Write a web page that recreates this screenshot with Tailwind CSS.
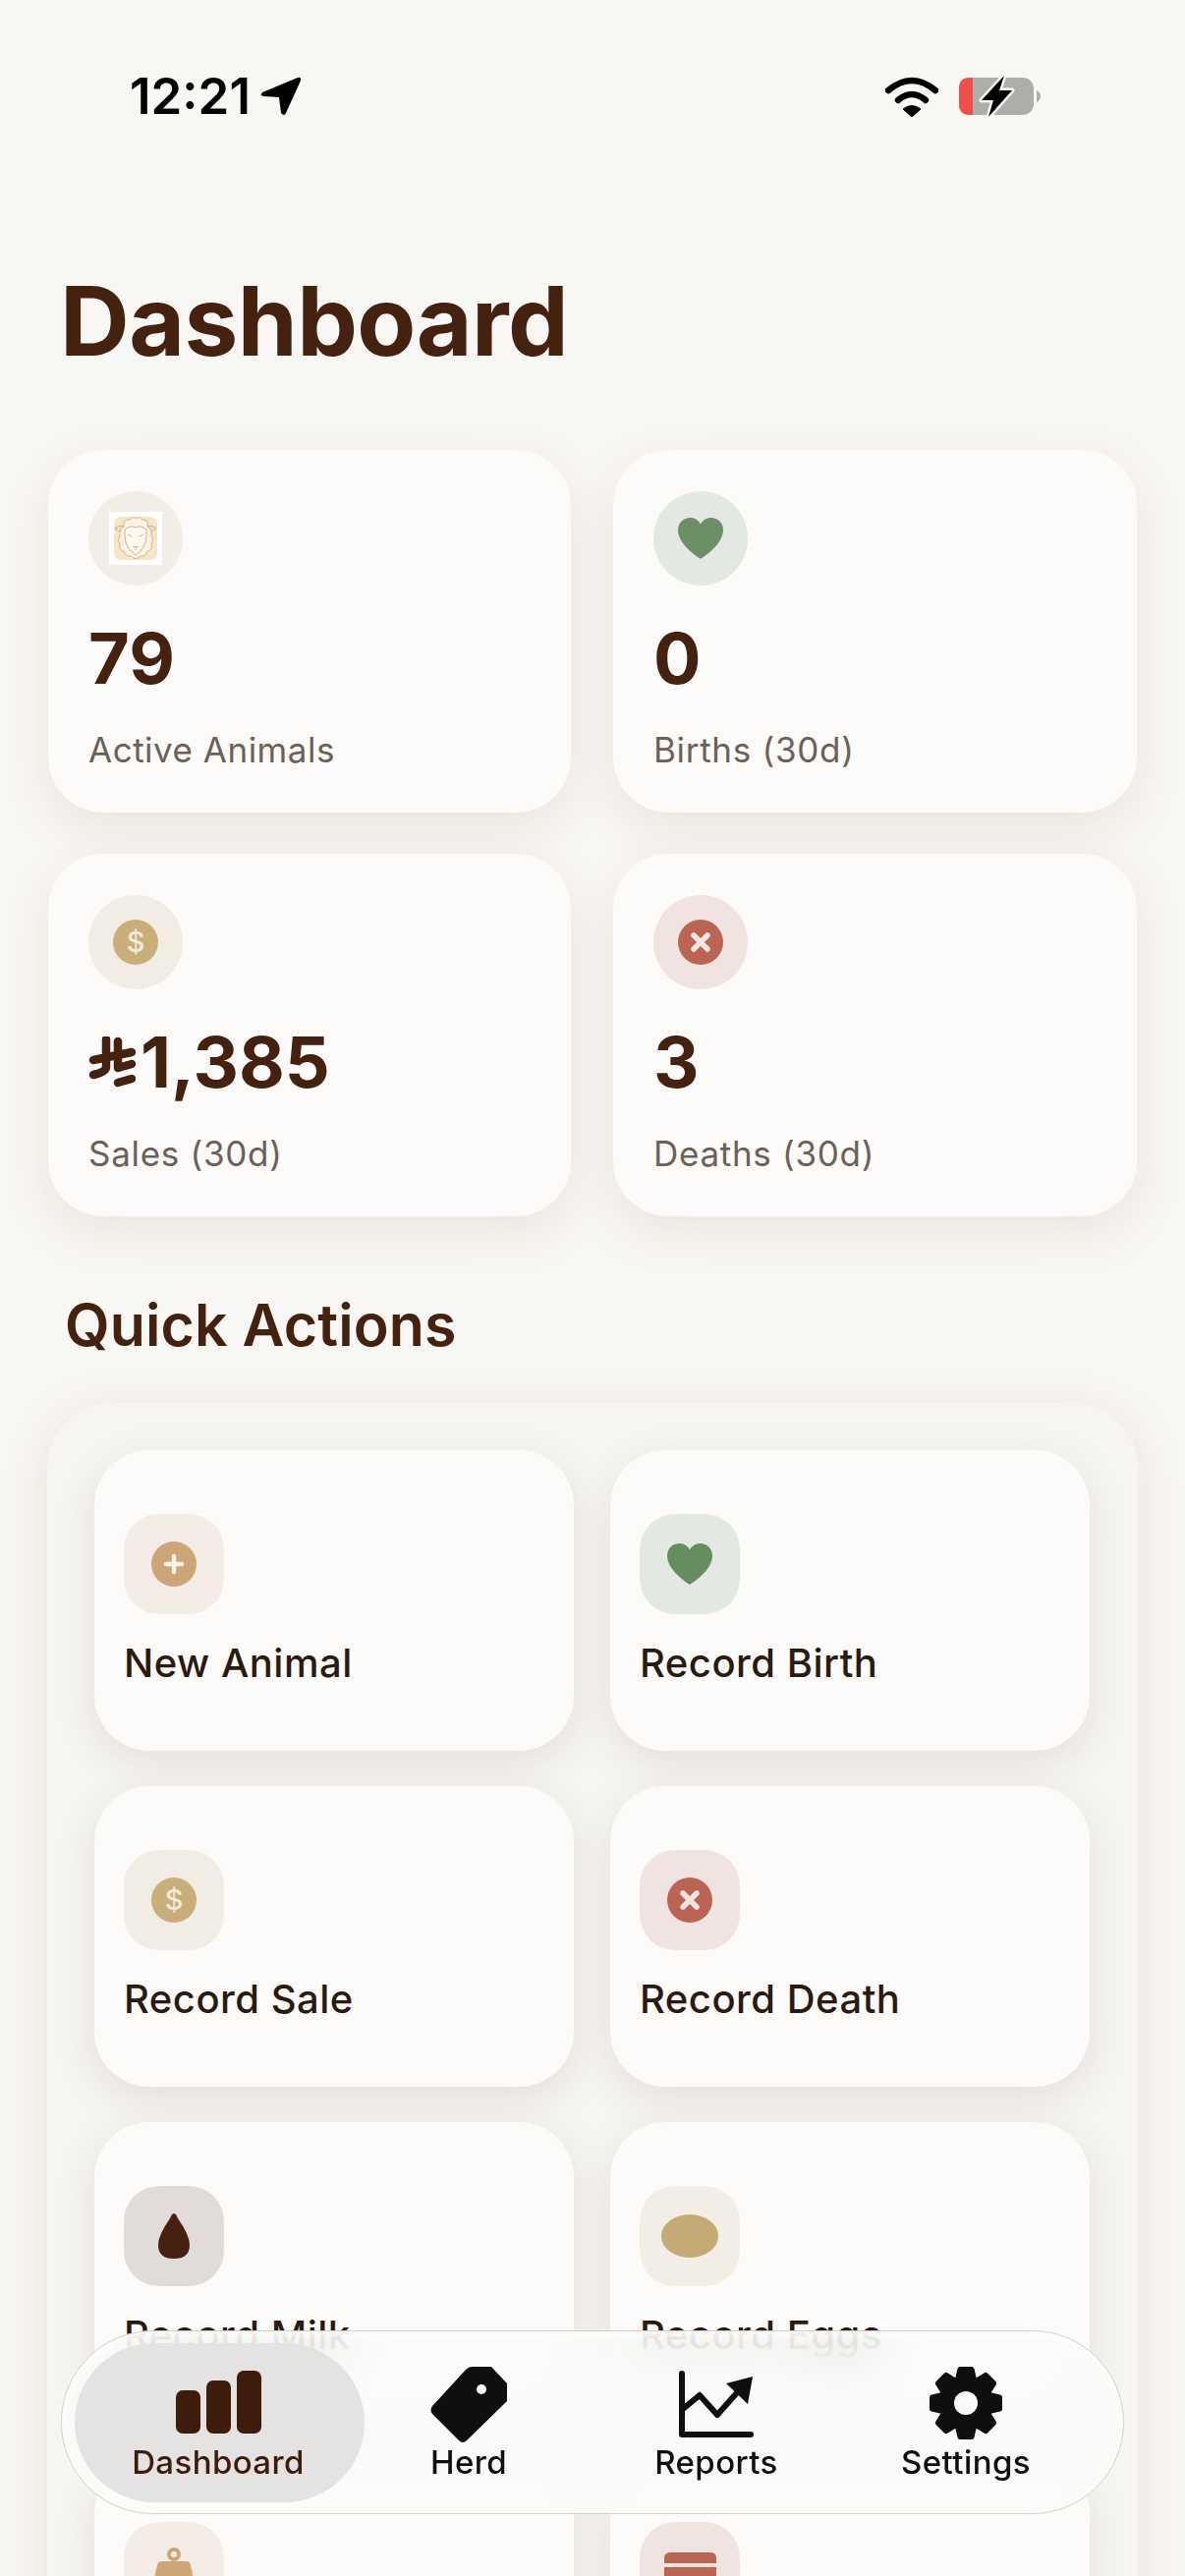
<!DOCTYPE html>
<html lang="en">
<head>
<meta charset="UTF-8">
<title>Dashboard</title>
<script src="https://cdn.jsdelivr.net/npm/@tailwindcss/browser@4"></script>
</head>
<body class="m-0 bg-[#f9f7f3]">
<div class="relative w-[1206px] h-[2622px] overflow-hidden bg-[#f9f7f3] font-['Inter',sans-serif]">

  <!-- status bar -->
  <div class="flex items-center justify-between h-[118px] pt-[78px] pl-[132px] pr-[146px] text-black">
    <div class="flex items-center gap-[10px]">
      <span class="text-[51px] leading-[40px] font-semibold">12:21</span>
      <svg class="w-[42px] h-[40px]" viewBox="0 0 42 40"><path d="M38 1 L2 16 Q-1 19 3 20 L19 21 L21 37 Q24 41 26 37 L41 4 Q42 0 38 1Z" fill="#000"/></svg>
    </div>
    <div class="flex items-center gap-[21px]">
      <svg class="w-[54px] h-[41px]" viewBox="0 0 54 41"><path d="M3 14 Q27 -6 51 14" fill="none" stroke="#000" stroke-width="6.5" stroke-linecap="round"/><path d="M13 24 Q27 12 41 24" fill="none" stroke="#000" stroke-width="6.5" stroke-linecap="round"/><path d="M27 41 L18 33 Q27 26 36 33Z" fill="#000" stroke="#000" stroke-width="1" stroke-linejoin="round"/></svg>
      <svg class="w-[84px] h-[44px]" viewBox="0 0 84 44"><rect x="0" y="3" width="76" height="38" rx="11" fill="#afada8"/><path d="M11 3 H14 V41 H11 Q0 41 0 30 V14 Q0 3 11 3Z" fill="#ee4f49"/><path d="M79 16 Q83 18 83 22 Q83 26 79 28Z" fill="#afada8"/><path d="M46 1 L23 26 H35 L30 43 L54 16 H41Z" fill="#000" stroke="#f9f7f3" stroke-width="5" stroke-linejoin="round" paint-order="stroke"/></svg>
    </div>
  </div>

  <!-- title -->
  <h1 class="mt-[154px] ml-[61px] text-[98px] leading-[110px] font-bold tracking-[-0.6px] text-[#45210f]">Dashboard</h1>

  <!-- stat cards -->
  <div class="grid grid-cols-[532px_533px] gap-x-[43px] gap-y-[42px] mt-[76px] ml-[49px]">
    <div class="h-[369px] rounded-[56px] bg-[#fcfbf9] shadow-[0_16px_50px_rgba(80,50,20,0.09)] pt-[42px] pl-[41px]">
      <div class="flex items-center justify-center w-[96px] h-[96px] rounded-full bg-[#f3ede7]">
        <svg class="w-[54px] h-[54px]" viewBox="0 0 54 54">
          <rect width="54" height="54" fill="#fff"/>
          <rect x="5" y="5" width="44" height="44" rx="7" fill="#f9e4c8"/>
          <path d="M6 17 Q11 12 17 16 L15 22 Q9 20 6 17Z M48 17 Q43 12 37 16 L39 22 Q45 20 48 17Z" fill="#f0dcc0" stroke="#cdb392" stroke-width="1"/>
          <path d="M15 15 Q14 7 21 8 Q24 4 27 6 Q31 4 34 8 Q41 8 39 15 Q44 18 43 24 Q46 29 43 33 Q44 39 39 40 Q37 46 32 45 Q27 50 22 45 Q17 46 15 40 Q10 39 11 33 Q8 29 11 24 Q10 18 15 15Z" fill="#fdf3e4" stroke="#cdb392" stroke-width="1"/>
          <path d="M16 18 Q22 13 27 16 Q32 13 38 18 L38 26 Q37 37 27 44 Q17 37 16 26Z" fill="#fef8ef" stroke="#cdb392" stroke-width="1"/>
          <path d="M19 23 L23 25 M35 23 L31 25 M24 35 Q27 37 30 35 M27 36 V39" fill="none" stroke="#cdb392" stroke-width="1"/>
        </svg>
      </div>
      <div class="mt-[34px] text-[72px] leading-[80px] font-bold text-[#45210f]">79</div>
      <div class="mt-[31px] text-[35px] leading-[44px] tracking-[0.5px] text-[#6d6056]">Active Animals</div>
    </div>

    <div class="h-[369px] rounded-[56px] bg-[#fcfbf9] shadow-[0_16px_50px_rgba(80,50,20,0.09)] pt-[42px] pl-[41px]">
      <div class="flex items-center justify-center w-[96px] h-[96px] rounded-full bg-[#e3e9e2]">
        <svg class="w-[46px] h-[42px]" viewBox="0 0 46 42"><path d="M23 42 C23 42 0 28 0 12.5 C0 5 5.5 0 12.5 0 C17 0 21 2.5 23 6.5 C25 2.5 29 0 33.5 0 C40.5 0 46 5 46 12.5 C46 28 23 42 23 42Z" fill="#6c8f66"/></svg>
      </div>
      <div class="mt-[34px] text-[72px] leading-[80px] font-bold text-[#45210f]">0</div>
      <div class="mt-[31px] text-[35px] leading-[44px] tracking-[0.7px] text-[#6d6056]">Births (30d)</div>
    </div>

    <div class="h-[369px] rounded-[56px] bg-[#fcfbf9] shadow-[0_16px_50px_rgba(80,50,20,0.09)] pt-[42px] pl-[41px]">
      <div class="flex items-center justify-center w-[96px] h-[96px] rounded-full bg-[#f1ede4]">
        <div class="flex items-center justify-center w-[46px] h-[46px] rounded-full bg-[#c8ae78] text-[29px] font-medium text-[#f2ead8]">$</div>
      </div>
      <div class="flex items-center mt-[34px] h-[80px] text-[72px] leading-[80px] font-bold text-[#45210f]">
        <svg class="w-[48px] h-[54px] mr-[5px] mt-[2px]" viewBox="0 0 48 54" role="img" aria-label="SAR"><path d="M18 3 V31 Q18 36 5 39 M5 24 L44 16 M30 5 V32 L44 28 M30 47 L44 43" fill="none" stroke="#45210f" stroke-width="8.5" stroke-linecap="round" stroke-linejoin="round"/></svg>
        <span>1,385</span>
      </div>
      <div class="mt-[31px] text-[35px] leading-[44px] tracking-[0.7px] text-[#6d6056]">Sales (30d)</div>
    </div>

    <div class="h-[369px] rounded-[56px] bg-[#fcfbf9] shadow-[0_16px_50px_rgba(80,50,20,0.09)] pt-[42px] pl-[41px]">
      <div class="flex items-center justify-center w-[96px] h-[96px] rounded-full bg-[#f0e3e0]">
        <svg class="w-[46px] h-[46px]" viewBox="0 0 46 46"><circle cx="23" cy="23" r="23" fill="#bb6453"/><path d="M16 16 L30 30 M30 16 L16 30" stroke="#f5e4df" stroke-width="5.5" stroke-linecap="round"/></svg>
      </div>
      <div class="mt-[34px] text-[72px] leading-[80px] font-bold text-[#45210f]">3</div>
      <div class="mt-[31px] text-[35px] leading-[44px] tracking-[0.7px] text-[#6d6056]">Deaths (30d)</div>
    </div>
  </div>

  <!-- quick actions -->
  <h2 class="mt-[75px] ml-[66px] text-[59px] leading-[72px] font-semibold tracking-[0.1px] text-[#45210f]">Quick Actions</h2>

  <div class="mt-[43px] ml-[48px] w-[1110px] rounded-[66px] bg-[#f6f5f2] shadow-[0_10px_50px_rgba(80,50,20,0.1)] pt-[48px] px-[48px] pb-[48px]">
    <div class="grid grid-cols-[488px_488px] gap-x-[37px] gap-y-[36px]">

      <div class="h-[306px] rounded-[56px] bg-[#fcfbf9] shadow-[0_12px_40px_rgba(80,50,20,0.1)] pt-[65px] pl-[30px]">
        <div class="flex items-center justify-center w-[102px] h-[102px] rounded-[36px] bg-[#f4ede6]">
          <svg class="w-[46px] h-[46px]" viewBox="0 0 46 46"><circle cx="23" cy="23" r="23" fill="#cda677"/><path d="M23 15 V31 M15 23 H31" stroke="#f8f1e8" stroke-width="4.5" stroke-linecap="round"/></svg>
        </div>
        <div class="mt-[26px] text-[40px] leading-[48px] font-[550] tracking-[0.5px] text-[#2b1a0f]">New Animal</div>
      </div>

      <div class="h-[306px] rounded-[56px] bg-[#fcfbf9] shadow-[0_12px_40px_rgba(80,50,20,0.1)] pt-[65px] pl-[30px]">
        <div class="flex items-center justify-center w-[102px] h-[102px] rounded-[36px] bg-[#e3e9e2]">
          <svg class="w-[46px] h-[42px]" viewBox="0 0 46 42"><path d="M23 42 C23 42 0 28 0 12.5 C0 5 5.5 0 12.5 0 C17 0 21 2.5 23 6.5 C25 2.5 29 0 33.5 0 C40.5 0 46 5 46 12.5 C46 28 23 42 23 42Z" fill="#668d60"/></svg>
        </div>
        <div class="mt-[26px] text-[40px] leading-[48px] font-[550] tracking-[0.5px] text-[#2b1a0f]">Record Birth</div>
      </div>

      <div class="h-[306px] rounded-[56px] bg-[#fcfbf9] shadow-[0_12px_40px_rgba(80,50,20,0.1)] pt-[65px] pl-[30px]">
        <div class="flex items-center justify-center w-[102px] h-[102px] rounded-[36px] bg-[#f1ede4]">
          <div class="flex items-center justify-center w-[46px] h-[46px] rounded-full bg-[#c8ae78] text-[29px] font-medium text-[#f2ead8]">$</div>
        </div>
        <div class="mt-[26px] text-[40px] leading-[48px] font-[550] tracking-[0.5px] text-[#2b1a0f]">Record Sale</div>
      </div>

      <div class="h-[306px] rounded-[56px] bg-[#fcfbf9] shadow-[0_12px_40px_rgba(80,50,20,0.1)] pt-[65px] pl-[30px]">
        <div class="flex items-center justify-center w-[102px] h-[102px] rounded-[36px] bg-[#f0e3e0]">
          <svg class="w-[46px] h-[46px]" viewBox="0 0 46 46"><circle cx="23" cy="23" r="23" fill="#bb6453"/><path d="M16 16 L30 30 M30 16 L16 30" stroke="#f5e4df" stroke-width="5.5" stroke-linecap="round"/></svg>
        </div>
        <div class="mt-[26px] text-[40px] leading-[48px] font-[550] tracking-[0.5px] text-[#2b1a0f]">Record Death</div>
      </div>

      <div class="h-[306px] rounded-[56px] bg-[#fcfbf9] shadow-[0_12px_40px_rgba(80,50,20,0.1)] pt-[65px] pl-[30px]">
        <div class="flex items-center justify-center w-[102px] h-[102px] rounded-[36px] bg-[#e1dcd9]">
          <svg class="w-[32px] h-[46px]" viewBox="0 0 32 46"><path d="M16 0 Q18 0 20 5 Q32 22 32 32 Q32 46 16 46 Q0 46 0 32 Q0 22 12 5 Q14 0 16 0Z" fill="#45210f"/></svg>
        </div>
        <div class="mt-[26px] text-[40px] leading-[48px] font-[550] tracking-[0.5px] text-[#2b1a0f]">Record Milk</div>
      </div>

      <div class="h-[306px] rounded-[56px] bg-[#fcfbf9] shadow-[0_12px_40px_rgba(80,50,20,0.1)] pt-[65px] pl-[30px]">
        <div class="flex items-center justify-center w-[102px] h-[102px] rounded-[36px] bg-[#f3eee5]">
          <div class="w-[58px] h-[44px] rounded-[50%] bg-[#c4aa74]"></div>
        </div>
        <div class="mt-[26px] text-[40px] leading-[48px] font-[550] tracking-[0.5px] text-[#2b1a0f]">Record Eggs</div>
      </div>

      <div class="h-[306px] rounded-[56px] bg-[#fcfbf9] shadow-[0_12px_40px_rgba(80,50,20,0.1)] pt-[65px] pl-[30px]">
        <div class="flex items-start justify-center w-[102px] h-[102px] rounded-[36px] bg-[#f4ede6] pt-[26px]">
          <svg class="w-[46px] h-[50px]" viewBox="0 0 46 50"><circle cx="23" cy="7" r="5" fill="none" stroke="#cda677" stroke-width="4"/><path d="M10 14 H36 Q39 14 40 18 L46 46 Q46 50 42 50 H4 Q0 50 0 46 L6 18 Q7 14 10 14Z" fill="#cda677"/></svg>
        </div>
      </div>

      <div class="h-[306px] rounded-[56px] bg-[#fcfbf9] shadow-[0_12px_40px_rgba(80,50,20,0.1)] pt-[65px] pl-[30px]">
        <div class="flex items-start justify-center w-[102px] h-[102px] rounded-[36px] bg-[#f0e3e0] pt-[31px]">
          <svg class="w-[53px] h-[44px]" viewBox="0 0 53 44"><path d="M6 0 H47 Q53 0 53 6 V11 H0 V6 Q0 0 6 0Z M0 15 H53 V38 Q53 44 47 44 H6 Q0 44 0 38Z" fill="#bb6453"/></svg>
        </div>
      </div>
    </div>
  </div>

  <!-- floating tab bar -->
  <nav class="absolute left-[62px] top-[2372px] flex w-[1082px] h-[187px] rounded-full bg-[#fbfbfa]/75 backdrop-blur-xl border border-[#d2d0cc] shadow-[inset_0_4px_8px_rgba(255,255,255,0.9)]">
    <div class="absolute left-[13px] top-[12px] flex flex-col items-center w-[295px] h-[162px] rounded-[81px] bg-[#e4e3e2] pt-[28px] pr-[3px]">
      <svg class="w-[87px] h-[64px]" viewBox="0 0 87 64"><rect x="0" y="20" width="25" height="44" rx="7" fill="#3e1c0c"/><rect x="31" y="10" width="25" height="54" rx="7" fill="#3e1c0c"/><rect x="62" y="0" width="25" height="64" rx="7" fill="#3e1c0c"/></svg>
      <span class="mt-[9px] text-[33px] leading-[40px] font-medium tracking-[0.4px] text-[#3e1c0c]">Dashboard</span>
    </div>
    <div class="absolute left-[314px] top-[36px] flex flex-col items-center w-[200px]">
      <svg class="w-[78px] h-[78px]" viewBox="0 0 78 78"><path fill-rule="evenodd" d="M42 0 H62 L78 17 V35 L37 75 Q33 79 29 75 L2 48 Q-1 44 2 40 L36 3 Q39 0 42 0Z M47 23 a5 5 0 1 0 10 0 a5 5 0 1 0 -10 0Z" fill="#0f0f0f"/></svg>
      <span class="-mt-[1px] text-[33px] leading-[40px] font-medium tracking-[0.4px] text-[#0f0f0f]">Herd</span>
    </div>
    <div class="absolute left-[566px] top-[36px] flex flex-col items-center w-[200px]">
      <svg class="w-[78px] h-[78px]" viewBox="0 0 78 78"><path d="M4 7 V69 H74" fill="none" stroke="#0f0f0f" stroke-width="6" stroke-linecap="round" stroke-linejoin="round"/><path d="M5 43 L22 29 L40 49 L64 22" fill="none" stroke="#0f0f0f" stroke-width="6" stroke-linejoin="round"/><path d="M49 17 L76 10 L71 38Z" fill="#0f0f0f"/></svg>
      <span class="-mt-[1px] text-[33px] leading-[40px] font-medium tracking-[0.4px] text-[#0f0f0f]">Reports</span>
    </div>
    <div class="absolute left-[820px] top-[36px] flex flex-col items-center w-[200px]">
      <svg class="w-[74px] h-[74px]" viewBox="-37 -37 74 74">
        <circle r="28" fill="#0f0f0f"/>
        <g fill="#0f0f0f">
          <path d="M-6 -37 H6 Q8 -37 8.5 -35 L11 -24 H-11 L-8.5 -35 Q-8 -37 -6 -37Z"/>
          <path transform="rotate(45)" d="M-6 -37 H6 Q8 -37 8.5 -35 L11 -24 H-11 L-8.5 -35 Q-8 -37 -6 -37Z"/>
          <path transform="rotate(90)" d="M-6 -37 H6 Q8 -37 8.5 -35 L11 -24 H-11 L-8.5 -35 Q-8 -37 -6 -37Z"/>
          <path transform="rotate(135)" d="M-6 -37 H6 Q8 -37 8.5 -35 L11 -24 H-11 L-8.5 -35 Q-8 -37 -6 -37Z"/>
          <path transform="rotate(180)" d="M-6 -37 H6 Q8 -37 8.5 -35 L11 -24 H-11 L-8.5 -35 Q-8 -37 -6 -37Z"/>
          <path transform="rotate(225)" d="M-6 -37 H6 Q8 -37 8.5 -35 L11 -24 H-11 L-8.5 -35 Q-8 -37 -6 -37Z"/>
          <path transform="rotate(270)" d="M-6 -37 H6 Q8 -37 8.5 -35 L11 -24 H-11 L-8.5 -35 Q-8 -37 -6 -37Z"/>
          <path transform="rotate(315)" d="M-6 -37 H6 Q8 -37 8.5 -35 L11 -24 H-11 L-8.5 -35 Q-8 -37 -6 -37Z"/>
        </g>
        <circle r="12" fill="#f9f9f8"/>
      </svg>
      <span class="mt-[3px] text-[33px] leading-[40px] font-medium tracking-[0.4px] text-[#0f0f0f]">Settings</span>
    </div>
  </nav>
</div>
</body>
</html>
